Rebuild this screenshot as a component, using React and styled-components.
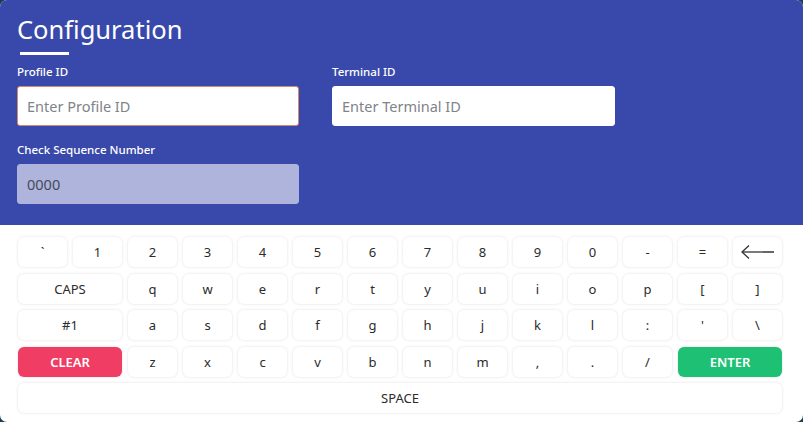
import React from 'react';
import styled, { createGlobalStyle } from 'styled-components';

const GlobalStyle = createGlobalStyle`
  html, body {
    margin: 0;
    padding: 0;
    background: #173f4f;
    font-family: "Noto Sans", "Open Sans", sans-serif;
  }
`;

const Panel = styled.div`
  width: 803px;
  height: 422px;
  border-radius: 7px;
  overflow: hidden;
  background: #fff;
  display: flex;
  flex-direction: column;
`;

const Header = styled.div`
  background: #3949ab;
  height: 225px;
  box-sizing: border-box;
  padding: 12px 17px 0;
  color: #fff;
`;

const Title = styled.h1`
  margin: 0;
  font-size: 25.5px;
  font-weight: 400;
  line-height: 34px;
`;

const Underline = styled.div`
  width: 49px;
  height: 3px;
  background: #fff;
  margin: 6px 0 0 3px;
`;

const Fields = styled.div`
  display: grid;
  grid-template-columns: 282px 283px;
  column-gap: 33px;
  row-gap: 16px;
  margin-top: 9px;
`;

const Field = styled.div`
  display: flex;
  flex-direction: column;
`;

const Label = styled.label`
  font-size: 11.5px;
  font-weight: 500;
  line-height: 16px;
  margin-bottom: 6px;
`;

const Input = styled.input`
  box-sizing: border-box;
  height: 40px;
  width: 100%;
  border: 1px solid ${p => (p.$focused ? '#d48a70' : p.$muted ? '#aeb4dc' : '#fff')};
  border-radius: 3px;
  background: ${p => (p.$muted ? '#aeb4dc' : '#fff')};
  padding: 0 9px;
  font-family: inherit;
  font-size: 14.5px;
  color: #464a58;
  outline: none;
  &::placeholder {
    color: #80838a;
  }
`;

const Keyboard = styled.div`
  flex: 1;
  padding: 12px 21px 0 18px;
  display: grid;
  grid-template-columns: repeat(14, 1fr);
  grid-auto-rows: 30px;
  column-gap: 6px;
  row-gap: 6.5px;
`;

const Key = styled.button`
  grid-column: span ${p => p.$span || 1};
  border: none;
  border-radius: 6px;
  background: ${p => p.$bg || '#fff'};
  color: ${p => (p.$bg ? '#fff' : '#2b2b2b')};
  font-family: inherit;
  font-size: 13px;
  font-weight: ${p => (p.$bg ? 600 : 400)};
  box-shadow: 0 0 3px rgba(0, 0, 0, 0.13);
  display: flex;
  align-items: center;
  justify-content: center;
  padding: 0;
  cursor: pointer;
`;

const BackArrow = () => (
  <svg width="36" height="16" viewBox="0 0 36 16" fill="none" stroke="#333" strokeWidth="1.3">
    <path d="M2 8 H34" />
    <path d="M9 1.5 L2 8 L9 14.5" />
  </svg>
);

const rows = [
  ['`', '1', '2', '3', '4', '5', '6', '7', '8', '9', '0', '-', '='],
  ['q', 'w', 'e', 'r', 't', 'y', 'u', 'i', 'o', 'p', '[', ']'],
  ['a', 's', 'd', 'f', 'g', 'h', 'j', 'k', 'l', ':', "'", '\\'],
  ['z', 'x', 'c', 'v', 'b', 'n', 'm', ',', '.', '/'],
];

export default function App() {
  return (
    <>
      <GlobalStyle />
      <Panel>
        <Header>
          <Title>Configuration</Title>
          <Underline />
          <Fields>
            <Field>
              <Label>Profile ID</Label>
              <Input $focused placeholder="Enter Profile ID" />
            </Field>
            <Field>
              <Label>Terminal ID</Label>
              <Input placeholder="Enter Terminal ID" />
            </Field>
            <Field>
              <Label>Check Sequence Number</Label>
              <Input $muted defaultValue="0000" />
            </Field>
          </Fields>
        </Header>
        <Keyboard>
          {rows[0].map(k => <Key key={k}>{k}</Key>)}
          <Key><BackArrow /></Key>
          <Key $span={2}>CAPS</Key>
          {rows[1].map(k => <Key key={k}>{k}</Key>)}
          <Key $span={2}>#1</Key>
          {rows[2].map(k => <Key key={k}>{k}</Key>)}
          <Key $span={2} $bg="#ef3d63">CLEAR</Key>
          {rows[3].map(k => <Key key={k}>{k}</Key>)}
          <Key $span={2} $bg="#1ec173">ENTER</Key>
          <Key $span={14}>SPACE</Key>
        </Keyboard>
      </Panel>
    </>
  );
}
